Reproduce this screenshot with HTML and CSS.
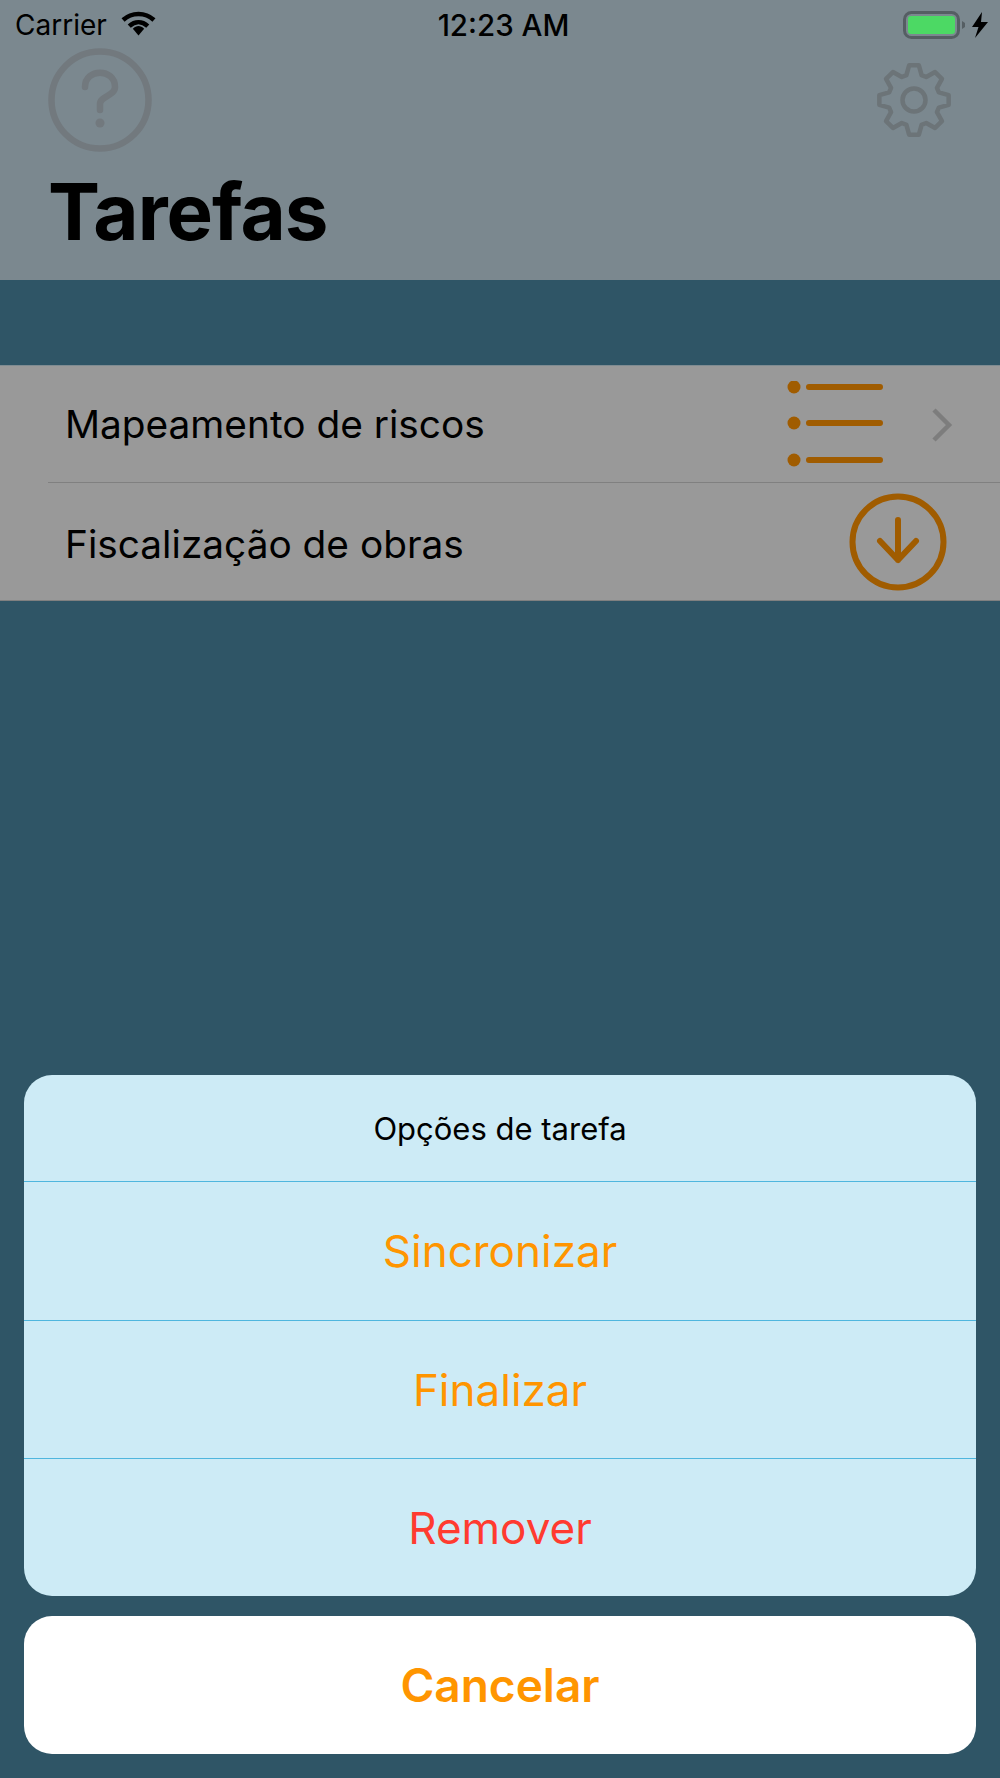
FILE: index.html
```html
<!DOCTYPE html>
<html lang="pt">
<head>
<meta charset="utf-8">
<title>Tarefas</title>
<link rel="stylesheet" href="styles.css">
</head>
<body>
<main class="app">
  <header class="header">
    <div class="status">
      <div class="status-left">
        <span class="carrier">Carrier</span>
        <svg class="wifi" width="35" height="25" viewBox="0 0 34 24"><path d="M2 8.6C10.5 0.8 23.5 0.8 32 8.6" class="wifi-arc"/><path d="M8 14.6C13.5 9.6 20.5 9.6 26 14.6" class="wifi-arc"/><path d="M11.5 17.2C15 13.6 19 13.6 22.5 17.2L17 23.6Z" class="wifi-dot"/></svg>
      </div>
      <span class="time">12:23 AM</span>
      <div class="status-right">
        <svg width="64" height="28" viewBox="0 0 64 28"><rect x="1.5" y="1.5" width="54" height="25" rx="7" class="bat-shell"/><rect x="5" y="5" width="47" height="18" rx="3" class="bat-fill"/><path d="M59 10L62 12V16L59 18Z" class="bat-nub"/></svg>
        <svg width="16" height="26" viewBox="0 0 16 26"><path d="M10 0L0 15H6.5L3 26L16 10H9Z" class="bolt"/></svg>
      </div>
    </div>
    <div class="tools">
      <svg width="104" height="104" viewBox="0 0 104 104"><circle cx="52" cy="52" r="48.5" class="tool-line"/><path d="M37 39C37 20 67 20 67 39C67 48 52 48 52 56V62" class="tool-line"/><circle cx="52" cy="75" r="4.5" class="tool-fill"/></svg>
      <svg class="gear" width="80" height="80" viewBox="-40 -40 80 80"><path class="gear-line" d="M-7.6-24.86L-4.87-34.66L4.87-34.66L7.6-24.86L12.21-22.96L21.06-27.95L27.95-21.06L22.96-12.21L24.86-7.6L34.66-4.87L34.66 4.87L24.86 7.6L22.96 12.21L27.95 21.06L21.06 27.95L12.21 22.96L7.6 24.86L4.87 34.66L-4.87 34.66L-7.6 24.86L-12.21 22.96L-21.06 27.95L-27.95 21.06L-22.96 12.21L-24.86 7.6L-34.66 4.87L-34.66-4.87L-24.86-7.6L-22.96-12.21L-27.95-21.06L-21.06-27.95L-12.21-22.96Z"/><circle r="11.5" class="gear-line"/></svg>
    </div>
    <h1 class="title">Tarefas</h1>
  </header>

  <section class="list">
    <div class="row row-first">
      <span class="row-text">Mapeamento de riscos</span>
      <svg class="icon-list" width="96" height="88" viewBox="0 0 96 88"><circle cx="7" cy="6" r="6.5" class="accent-fill"/><circle cx="7" cy="42" r="6.5" class="accent-fill"/><circle cx="7" cy="79" r="6.5" class="accent-fill"/><path d="M22 6H93M22 42H93M22 79H93" class="accent-line"/></svg>
      <svg class="chevron" width="22" height="34" viewBox="0 0 22 34"><path d="M3 2L18 17L3 32" class="chevron-line"/></svg>
    </div>
    <div class="row row-second">
      <span class="row-text">Fiscalização de obras</span>
      <svg class="icon-download" width="98" height="98" viewBox="0 0 98 98"><circle cx="49" cy="49" r="45.5" class="accent-line"/><path d="M49 27V67M31 48L49 67L67 48" class="accent-line"/></svg>
    </div>
  </section>

  <section class="sheet">
    <div class="sheet-title">Opções de tarefa</div>
    <div class="sheet-item sheet-item-first action">Sincronizar</div>
    <div class="sheet-item action">Finalizar</div>
    <div class="sheet-item danger">Remover</div>
  </section>
  <div class="cancel">Cancelar</div>
</main>
</body>
</html>
```
FILE: styles.css
```css
* { box-sizing: border-box; }
html, body { margin: 0; padding: 0; }
body { background: #2f5566; font-family: Inter, "Liberation Sans", sans-serif; color: #000; }
.app { width: 1000px; height: 1778px; display: flex; flex-direction: column; overflow: hidden; background: #2f5566; }

.header { height: 280px; background: #7b888f; flex: none; }
.status { height: 50px; padding: 0 12px 0 15px; display: flex; align-items: center; justify-content: space-between; }
.status-left { display: flex; align-items: center; gap: 14px; width: 260px; }
.carrier { font-size: 28px; }
.wifi { margin-top: -4px; }
.wifi-arc { fill: none; stroke: #000; stroke-width: 4.4; }
.wifi-dot { fill: #000; }
.time { font-size: 29.5px; font-weight: 500; margin-left: 4px; }
.status-right { width: 260px; display: flex; justify-content: flex-end; align-items: center; gap: 5px; }
.bat-shell { fill: none; stroke: #555e63; stroke-width: 3; }
.bat-fill { fill: #4cd964; }
.bat-nub { fill: #555e63; }
.bolt { fill: #000; }

.tools { height: 104px; padding: 0 0 0 48px; margin-top: -2px; display: flex; justify-content: space-between; align-items: center; }
.tool-line { fill: none; stroke: #72797e; stroke-width: 6.5; stroke-linecap: round; }
.tool-fill { fill: #72797e; }
.gear { margin-right: 46px; }
.gear-line { fill: none; stroke: #6c7478; stroke-width: 4.5; stroke-linejoin: round; }
.title { margin: 19px 0 0 48px; font-size: 78px; line-height: 82px; font-weight: 700; letter-spacing: -1px; }

.list { margin-top: 85px; flex: none; }
.row { height: 118px; background: #999; display: flex; align-items: center; padding-left: 65px; position: relative; }
.row-first { border-top: 1px solid #7f8c92; }
.row-first::after { content: ""; position: absolute; left: 48px; right: 0; bottom: 0; height: 1px; background: #808080; }
.row-first .row-text { padding-bottom: 2px; }
.row-second { border-bottom: 1px solid #808080; }
.row-second .row-text { padding-top: 3px; }
.row-text { font-size: 38.8px; flex: 1; }
.icon-list { margin-right: 48px; }
.chevron { margin-right: 47px; }
.icon-download { margin-right: 53px; }
.accent-fill { fill: #a05c00; }
.accent-line { fill: none; stroke: #a05c00; stroke-width: 6; stroke-linecap: round; stroke-linejoin: round; }
.chevron-line { fill: none; stroke: #7d7d7d; stroke-width: 4.5; }

.sheet { margin: auto 24px 0; flex: none; background: #cdebf6; border-radius: 28px; overflow: hidden; }
.sheet-title { height: 106px; display: flex; align-items: center; justify-content: center; font-size: 31px; }
.sheet-item { height: 138px; border-top: 1px solid #4fb6de; display: flex; align-items: center; justify-content: center; font-size: 44px; }
.sheet-item-first { height: 139px; }
.action { color: #ff9500; }
.danger { color: #ff3b30; }
.cancel { margin: 20px 24px 24px; height: 138px; flex: none; background: #fff; border-radius: 28px; display: flex; align-items: center; justify-content: center; font-size: 46px; font-weight: 600; color: #ff9500; }
```
